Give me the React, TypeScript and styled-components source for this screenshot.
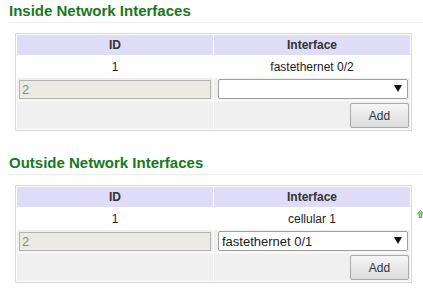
import React from "react";
import styled, { createGlobalStyle } from "styled-components";

const Global = createGlobalStyle`
  html, body { margin: 0; padding: 0; background: #fff; }
  body { font-family: "Liberation Sans", Arial, sans-serif; font-size: 12px; color: #333; }
  * { box-sizing: border-box; }
`;

const Page = styled.div`
  width: 423px;
  height: 291px;
  overflow: hidden;
  position: relative;
`;

const Section = styled.section<{ $first?: boolean }>`
  padding-left: 8px;
  margin-top: ${(p) => (p.$first ? "0" : "21px")};
`;

const Heading = styled.h2`
  margin: 0;
  padding: 2px 0 0 1px;
  height: 23px;
  font-size: 15px;
  font-weight: bold;
  color: #19771c;
  border-bottom: 1px solid #ececec;
  line-height: 17px;
`;

const Box = styled.div`
  margin: 10px 11px 0 7px;
  border: 1px solid #d9d9d9;
  padding: 0;
`;

const Table = styled.table`
  width: 100%;
  border-collapse: separate;
  border-spacing: 1px;
  table-layout: fixed;
`;

const Th = styled.th`
  background: #dedcf6;
  height: 20px;
  padding: 0;
  font-size: 12px;
  font-weight: bold;
  color: #333;
  text-align: center;
`;

const Td = styled.td`
  height: 21px;
  padding: 0;
  text-align: center;
  font-size: 12px;
  color: #222;
`;

const EditCell = styled.td`
  background: #f0f0f0;
  height: 22px;
  padding: 1px 2px;
`;

const ActionCell = styled.td`
  background: #f0f0f0;
  height: 28px;
  padding: 2px 0 1px 2px;
  text-align: right;
`;

const IdInput = styled.input`
  display: block;
  width: 100%;
  height: 19px;
  border: 1px solid #b4b4b4;
  background: #ebebe4;
  color: #8a8a8a;
  font-family: "Liberation Sans", Arial, sans-serif;
  font-size: 13px;
  padding: 0 2px;
  margin: 0;
`;

const SelectWrap = styled.div`
  position: relative;
  margin: 0 0 0 2px;
`;

const Select = styled.select`
  display: block;
  width: 100%;
  height: 20px;
  appearance: none;
  -webkit-appearance: none;
  border: 1px solid #a0a0a0;
  border-radius: 2px;
  background: #fff;
  color: #222;
  font-family: "Liberation Sans", Arial, sans-serif;
  font-size: 13px;
  padding: 0 3px;
  margin: 0;
`;

const Arrow = styled.span`
  position: absolute;
  right: 6px;
  top: 6px;
  width: 0;
  height: 0;
  border-left: 4px solid transparent;
  border-right: 4px solid transparent;
  border-top: 7px solid #111;
  pointer-events: none;
`;

const AddButton = styled.button`
  display: inline-block;
  vertical-align: top;
  width: 59px;
  height: 25px;
  border: 1px solid #a9a9a9;
  border-radius: 2px;
  background: linear-gradient(#f6f6f6, #dcdcdc);
  font-family: "Liberation Sans", Arial, sans-serif;
  font-size: 12px;
  color: #333;
  padding: 0;
  margin-right: 1px;
`;

const TopIcon = styled.svg`
  position: absolute;
  left: 417px;
  top: 210px;
`;

type Props = { title: string; first?: boolean; row: string; selected: string };

function InterfaceSection({ title, first, row, selected }: Props) {
  return (
    <Section $first={first}>
      <Heading>{title}</Heading>
      <Box>
        <Table>
          <thead>
            <tr>
              <Th>ID</Th>
              <Th>Interface</Th>
            </tr>
          </thead>
          <tbody>
            <tr>
              <Td>1</Td>
              <Td>{row}</Td>
            </tr>
            <tr>
              <EditCell>
                <IdInput disabled value="2" readOnly />
              </EditCell>
              <EditCell>
                <SelectWrap>
                  <Select value={selected} onChange={() => {}}>
                    <option value={selected}>{selected}</option>
                  </Select>
                  <Arrow />
                </SelectWrap>
              </EditCell>
            </tr>
            <tr>
              <ActionCell />
              <ActionCell>
                <AddButton>Add</AddButton>
              </ActionCell>
            </tr>
          </tbody>
        </Table>
      </Box>
    </Section>
  );
}

export default function App() {
  return (
    <Page>
      <Global />
      <InterfaceSection title="Inside Network Interfaces" first row="fastethernet 0/2" selected="" />
      <InterfaceSection title="Outside Network Interfaces" row="cellular 1" selected="fastethernet 0/1" />
      <TopIcon width="7" height="8" viewBox="0 0 7 8">
        <path d="M3.5 0.5 L6.5 3.8 L4.8 3.8 L4.8 7.5 L2.2 7.5 L2.2 3.8 L0.5 3.8 Z" fill="#8fd18a" stroke="#4aa048" strokeWidth="0.8" />
      </TopIcon>
    </Page>
  );
}
